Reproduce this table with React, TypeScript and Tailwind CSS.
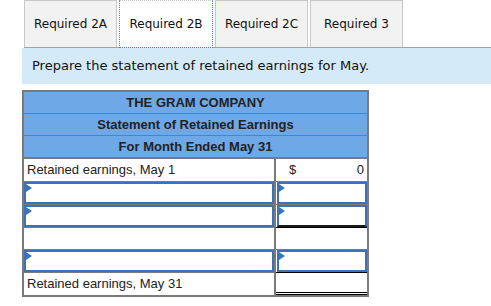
const tabs = ["Required 2A", "Required 2B", "Required 2C", "Required 3"];

function InputCell({ className = "" }: { className?: string }) {
  return (
    <div className={`relative h-full border-2 border-[#3b73b9] ${className}`}>
      <div className="absolute left-0 top-0 w-0 h-0 border-y-[4px] border-y-transparent border-l-[6px] border-l-[#3b73b9]" />
    </div>
  );
}

function HeaderRow({ text, last }: { text: string; last?: boolean }) {
  return (
    <div
      className={`h-[22px] flex items-center justify-center bg-[#6fa8e6] text-[13px] font-bold text-[#222] ${
        last ? "" : "border-b border-[#7a7a7a]"
      }`}
    >
      {text}
    </div>
  );
}

export default function App() {
  return (
    <div className="w-[491px] h-[306px] bg-white overflow-hidden">
      {/* tabs */}
      <div className="ml-[24px] flex gap-[2px] h-[48px] border-b border-[#a3a3a3] font-['DejaVu_Sans',Verdana,sans-serif] text-[12px] text-[#111]">
        {tabs.map((t, i) =>
          i === 1 ? (
            <div
              key={t}
              className="w-[94px] h-[48px] -mb-px flex items-center justify-center bg-white border border-dotted border-[#3a78d4] border-t-[#c8c8c8]"
            >
              {t}
            </div>
          ) : (
            <div
              key={t}
              className="w-[93px] h-full flex items-center justify-center bg-[#f2f2f2] border border-b-0 border-[#c8c8c8]"
            >
              {t}
            </div>
          )
        )}
      </div>

      {/* instructions */}
      <div className="ml-[22px] h-[36px] bg-[#d5eaf9] flex items-center pl-[10px] font-['DejaVu_Sans',Verdana,sans-serif] text-[13px] text-[#111]">
        Prepare the statement of retained earnings for May.
      </div>

      {/* statement */}
      <div className="mt-[6px] ml-[22px] w-[347px] border-2 border-[#7a7a7a] font-['Liberation_Sans',Arial,sans-serif] text-[13px] text-[#222]">
        <HeaderRow text="THE GRAM COMPANY" />
        <HeaderRow text="Statement of Retained Earnings" />
        <HeaderRow text="For Month Ended May 31" />

        <div className="h-[23px] flex border-t border-[#7a7a7a]">
          <div className="w-[252px] flex items-center pl-[3px] border-r-2 border-[#7a7a7a]">
            Retained earnings, May 1
          </div>
          <div className="flex-1 flex items-center justify-between pl-[13px] pr-[3px]">
            <span>$</span>
            <span>0</span>
          </div>
        </div>

        <div className="h-[23px] flex border-t border-[#7a7a7a]">
          <div className="w-[252px] border-r-2 border-[#7a7a7a]">
            <InputCell />
          </div>
          <div className="flex-1 pl-px">
            <InputCell />
          </div>
        </div>

        <div className="h-[23px] flex border-t border-[#7a7a7a]">
          <div className="w-[252px] border-r-2 border-[#7a7a7a]">
            <InputCell />
          </div>
          <div className="flex-1 pl-px">
            <InputCell className="border-b-[#1a1a1a]" />
          </div>
        </div>

        <div className="h-[22px] flex border-t border-[#7a7a7a]">
          <div className="w-[252px] border-r-2 border-[#7a7a7a]" />
          <div className="flex-1 border-t border-black -mt-px" />
        </div>

        <div className="h-[23px] flex border-t border-[#7a7a7a]">
          <div className="w-[252px] border-r-2 border-[#7a7a7a]">
            <InputCell />
          </div>
          <div className="flex-1 pl-px">
            <InputCell />
          </div>
        </div>

        <div className="h-[23px] flex border-t border-[#7a7a7a]">
          <div className="w-[252px] flex items-center pl-[3px] border-r-2 border-[#7a7a7a]">
            Retained earnings, May 31
          </div>
          <div className="flex-1 border-t border-black -mt-px border-b-[3px] border-b-black border-double" />
        </div>
      </div>
    </div>
  );
}
